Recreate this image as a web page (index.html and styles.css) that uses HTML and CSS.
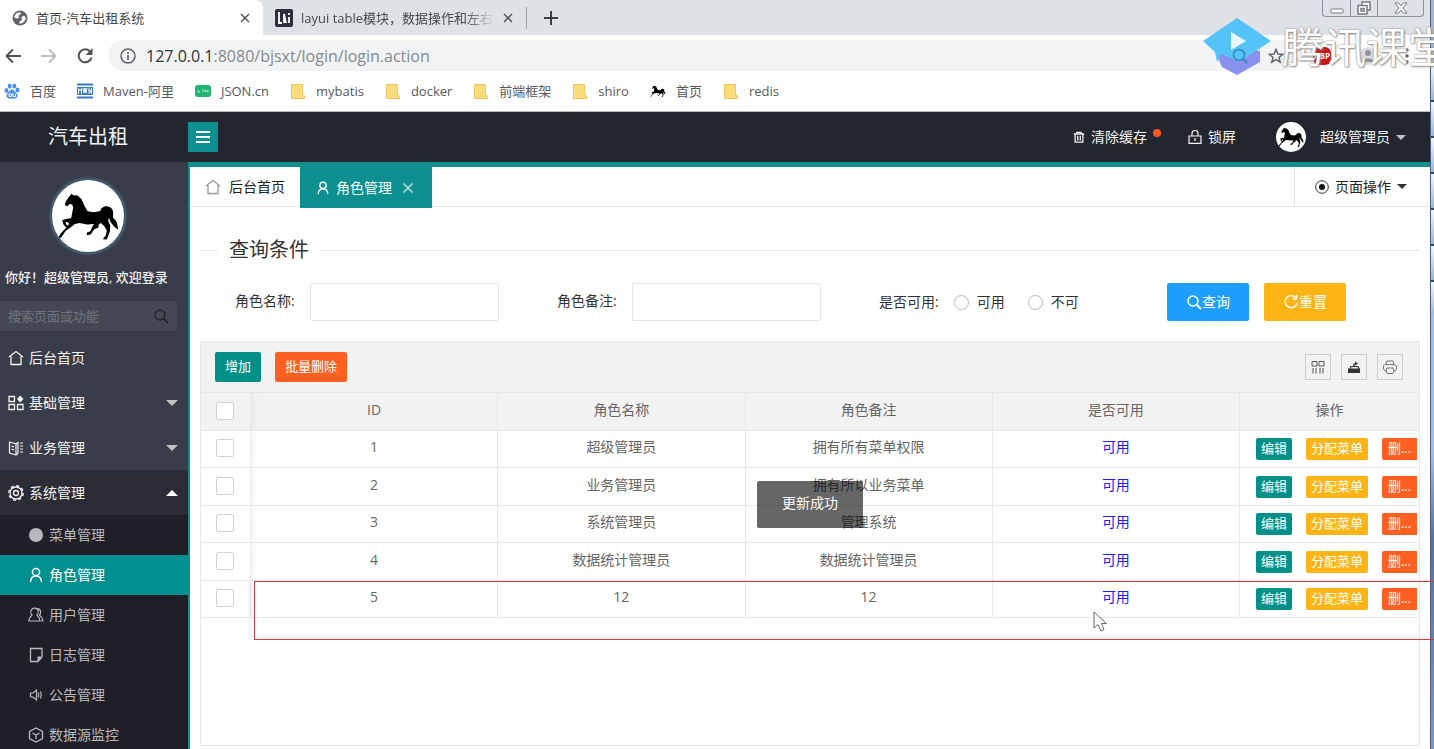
FILE: index.html
```html
<!DOCTYPE html>
<html lang="zh-CN">
<head>
<meta charset="utf-8">
<title>首页-汽车出租系统</title>
<link rel="stylesheet" href="styles.css">
</head>
<body>
<svg class="defs" aria-hidden="true">
  <symbol id="horse" viewBox="158 60 214 214"><path d="M216 101L221 105L234 106L246 117L254 136L264 153L282 156L302 152C302 143 312 138 321 138C334 139 340 148 340 160L339 171L350 184L355 208L343 199L331 183L327 172L325 181L331 196L330 213L321 237L309 236L318 224L321 210L313 197L303 188L297 192L296 201L283 207L273 222L261 224L262 216L272 212L278 198L283 191L262 192L240 188L226 191L212 202L199 211L186 230L174 236L184 219L198 204L209 190L203 184L198 186L201 193L207 198L201 202L192 192L188 180L202 175L215 174L218 158L221 142L218 133L211 131L203 138L196 134L199 124L207 112Z"/></symbol>
  <symbol id="home" viewBox="0 0 16 16"><path d="M1 7L8 1.500L15 7M3 6V14.500H13V6" fill="none" stroke="currentColor" stroke-width="1.300"/></symbol>
  <symbol id="user" viewBox="0 0 16 16"><circle cx="8" cy="5" r="3.600" fill="none" stroke="currentColor" stroke-width="1.500"/><path d="M2.500 15C2.700 11 5 9 8 9S13.300 11 13.500 15" fill="none" stroke="currentColor" stroke-width="1.500"/></symbol>
  <symbol id="search" viewBox="0 0 16 16"><circle cx="7" cy="7" r="5" fill="none" stroke="currentColor" stroke-width="1.500"/><path d="M10.500 10.500L15 15" stroke="currentColor" stroke-width="2"/></symbol>
  <symbol id="folder" viewBox="0 0 16 16"><path d="M1.500 1.500H12.500V11L14.500 13V15.500H1.500Z" fill="#fbdc7c" stroke="#efc75c"/></symbol>
  <symbol id="close" viewBox="0 0 12 12"><path d="M2 2L10 10M10 2L2 10" stroke="currentColor" stroke-width="1.500"/></symbol>
</svg>

<div class="window">
  <div class="browser">
    <div class="tabstrip">
      <div class="btab btab-on">
        <svg class="i16" viewBox="0 0 16 16"><circle cx="8" cy="8" r="7.500" fill="#5f6368"/><path d="M2 7L4 3.500L8 2L9 4L6.500 5.500L7 8L4 8.500ZM9.500 7L12 5.500L14 8L12 12L8 14L7 12L10 10Z" fill="#fff"/></svg>
        <span class="btab-title">首页-汽车出租系统</span>
        <button class="plain" aria-label="关闭标签"><svg class="i12"><use href="#close"/></svg></button>
      </div>
      <div class="btab">
        <svg class="i18" viewBox="0 0 18 18"><rect width="18" height="18" rx="2" fill="#2b303f"/><path d="M4 3V14H7M9 14V5L11 14M14 8V14M14 4V6" stroke="#fff" stroke-width="1.800" fill="none"/></svg>
        <span class="btab-title fade">layui table模块，数据操作和左右</span>
        <button class="plain" aria-label="关闭标签"><svg class="i12"><use href="#close"/></svg></button>
      </div>
      <span class="tab-sep"></span>
      <button class="plain newtab" aria-label="新标签"><svg class="i14" viewBox="0 0 14 14"><path d="M7 0V14M0 7H14" stroke="#3c4043" stroke-width="2"/></svg></button>
      <div class="winbtns">
        <button aria-label="最小化"><svg viewBox="0 0 14 12" class="i14"><rect x="1" y="7" width="12" height="4" rx="1" fill="#fff" stroke="#777b85"/></svg></button>
        <button aria-label="还原"><svg viewBox="0 0 14 14" class="i14"><path d="M5 4V1H13V9H10M1 4.500H10V13H1ZM4 7.500H7V10H4Z" fill="#fff" stroke="#777b85" stroke-width="1.500"/></svg></button>
        <button class="wide" aria-label="关闭"><svg viewBox="0 0 14 12" class="i14"><path d="M1 1H4.500L7 4L9.500 1H13L9 6L13 11H9.500L7 8L4.500 11H1L5 6Z" fill="#fff" stroke="#777b85"/></svg></button>
      </div>
    </div>

    <div class="navbar">
      <button class="plain" aria-label="后退"><svg class="i16" viewBox="0 0 16 16"><path d="M8 1.500L1.500 8L8 14.500M1.500 8H16" fill="none" stroke="#50545a" stroke-width="2"/></svg></button>
      <button class="plain" aria-label="前进"><svg class="i16" viewBox="0 0 16 16"><path d="M8 1.500L14.500 8L8 14.500M14.500 8H0" fill="none" stroke="#bdbfc4" stroke-width="2"/></svg></button>
      <button class="plain" aria-label="刷新"><svg class="i16" viewBox="0 0 16 16"><path d="M13.500 4A6.500 6.500 0 1 0 14.500 9.500" fill="none" stroke="#50545a" stroke-width="2"/><path d="M15.500 0V7H8.500Z" fill="#50545a"/></svg></button>
      <div class="omnibox">
        <svg class="i16" viewBox="0 0 16 16"><circle cx="8" cy="8" r="7" fill="none" stroke="#5f6368" stroke-width="1.500"/><path d="M8 7V12M8 4V5.800" stroke="#5f6368" stroke-width="1.800"/></svg>
        <span class="url"><b>127.0.0.1</b>:8080/bjsxt/login/login.action</span>
        <svg class="i16 star" viewBox="0 0 16 16"><path d="M8 1.500L9.900 6L14.700 6.300L11 9.400L12.200 14.200L8 11.600L3.800 14.200L5 9.400L1.300 6.300L6.100 6Z" fill="none" stroke="#5f6368" stroke-width="1.500"/></svg>
      </div>
      <div class="ext">
        <span class="abp">ABP</span>
        <svg class="i18" viewBox="0 0 18 18"><circle cx="9" cy="9" r="9" fill="#dcdee2"/><circle cx="9" cy="6" r="3" fill="#8f949c"/><path d="M3 15C4 10 14 10 15 15" fill="#8f949c"/></svg>
        <svg class="dots" viewBox="0 0 4 16"><circle cx="2" cy="2" r="1.700"/><circle cx="2" cy="8" r="1.700"/><circle cx="2" cy="14" r="1.700"/></svg>
      </div>
    </div>

    <nav class="bookmarks" aria-label="书签">
      <a href="#"><svg class="i16" viewBox="0 0 16 16" fill="#4a8df0"><ellipse cx="2.500" cy="7.500" rx="2" ry="2.500"/><ellipse cx="5.700" cy="3" rx="2" ry="2.600"/><ellipse cx="10.300" cy="3" rx="2" ry="2.600"/><ellipse cx="13.500" cy="7" rx="2" ry="2.500"/><path d="M8 6.500C10 6.500 11 9 13 11C15 14 12 16.500 8 15.500C4 16.500 1 14 3 11C5 9 6 6.500 8 6.500Z"/><path d="M5 11H7.500V13.500H5ZM9 10V13.500H11.500V11" fill="none" stroke="#fff"/></svg>百度</a>
      <a href="#"><svg class="i16" viewBox="0 0 16 16"><path d="M0 1.500H16M0 14.500H16" stroke="#3a78c2" stroke-width="2"/><rect y="4" width="16" height="8" fill="#3a78c2"/><path d="M1.500 11V5.500L3 8L4.500 5.500V11M6 5L7 10L8 5L9 10L10 5M12 11V5.500L14.500 10.500V5" fill="none" stroke="#fff"/></svg>Maven-阿里</a>
      <a href="#"><svg class="i16" viewBox="0 0 16 16"><rect y="2" width="16" height="12" rx="3" fill="#20b573"/><path d="M3 7V9H5M7 7H8V9M10 9V7L13 9V7" fill="none" stroke="#b9ecd3"/></svg>JSON.cn</a>
      <a href="#"><svg class="i16"><use href="#folder"/></svg>mybatis</a>
      <a href="#"><svg class="i16"><use href="#folder"/></svg>docker</a>
      <a href="#"><svg class="i16"><use href="#folder"/></svg>前端框架</a>
      <a href="#"><svg class="i16"><use href="#folder"/></svg>shiro</a>
      <a href="#"><svg class="i16" viewBox="170 85 190 160"><use href="#horse" x="158" y="60" width="214" height="214"/></svg>首页</a>
      <a href="#"><svg class="i16"><use href="#folder"/></svg>redis</a>
    </nav>
  </div>

  <div class="app">
    <header class="topbar">
      <div class="logo">汽车出租</div>
      <button class="fold" aria-label="折叠菜单"><svg class="i14" viewBox="0 0 14 14"><path d="M0 2H14M0 7H14M0 12H14" stroke="#fff" stroke-width="2"/></svg></button>
      <div class="topright">
        <a href="#" class="cache"><svg class="i12" viewBox="0 0 14 14"><path d="M1 3.500H13M4.500 3V1.500H9.500V3M2.500 4V13H11.500V4M5.500 5.500V11M8.500 5.500V11" fill="none" stroke="currentColor" stroke-width="1.500"/></svg>清除缓存<i class="dot"></i></a>
        <a href="#" class="lock"><svg class="i14" viewBox="0 0 14 14"><path d="M1 6H13V13.400H1ZM4 6V3.500A3 3 0 0 1 10 3.500V6M7 8V11" fill="none" stroke="currentColor" stroke-width="1.200"/></svg>锁屏</a>
        <a href="#" class="me"><span class="avatar small"><svg><use href="#horse"/></svg></span>超级管理员<i class="caret"></i></a>
      </div>
    </header>

    <aside class="sidebar">
      <div class="avatar large"><svg><use href="#horse"/></svg></div>
      <p class="hello">你好！超级管理员, 欢迎登录</p>
      <div class="side-search">
        <input type="text" placeholder="搜索页面或功能" aria-label="搜索页面或功能">
        <svg class="i16"><use href="#search"/></svg>
      </div>
      <nav class="menu">
        <a href="#"><svg class="i16"><use href="#home"/></svg>后台首页</a>
        <a href="#"><svg class="i16" viewBox="0 0 16 16"><path d="M1 1.500H6.500V6.500H1ZM1 9.500H6.500V14.500H1ZM9.500 9.500H15V14.500H9.500Z" fill="none" stroke="currentColor" stroke-width="1.300"/><path d="M12.200 .5L15.500 4L12.200 7.500L9 4Z" fill="currentColor"/></svg>基础管理<i class="caret"></i></a>
        <a href="#"><svg class="i16" viewBox="0 0 16 16"><path d="M1.500 2V13L8 15V4ZM8 4L10 2.500V13L8 15M3.500 6L6 7M3.500 9L6 10M12 3H15M12 6H15M12 9H15M12 12H15" fill="none" stroke="currentColor" stroke-width="1.200"/></svg>业务管理<i class="caret"></i></a>
        <a href="#" class="open"><svg class="i16" viewBox="0 0 16 16"><circle cx="8" cy="8" r="6" fill="none" stroke="currentColor" stroke-width="1.300"/><circle cx="8" cy="8" r="7.200" fill="none" stroke="currentColor" stroke-width="1.400" stroke-dasharray="3 2.650"/><circle cx="8" cy="8" r="2.500" fill="none" stroke="currentColor" stroke-width="1.300"/></svg>系统管理<i class="caret up"></i></a>
        <div class="sub">
          <a href="#"><svg class="i16" viewBox="0 0 16 16"><circle cx="8" cy="8" r="7" fill="currentColor"/></svg>菜单管理</a>
          <a href="#" class="on"><svg class="i16"><use href="#user"/></svg>角色管理</a>
          <a href="#"><svg class="i16" viewBox="0 0 16 16"><path d="M4 8A3.700 4 0 1 1 9 8C9.500 9.500 12 10 12 14H.8C.8 10 3.500 9.500 4 8ZM9.500 1.300C13.500 2 13 7 11.500 8C12 9.500 15 10 15 14H13" fill="none" stroke="currentColor" stroke-width="1.200"/></svg>用户管理</a>
          <a href="#"><svg class="i16" viewBox="0 0 16 16"><path d="M2.500 1.500H14V10L10 14.500H2.500Z" fill="none" stroke="currentColor" stroke-width="1.300"/><path d="M14 9.500H9.500V14.500Z" fill="currentColor"/></svg>日志管理</a>
          <a href="#"><svg class="i16" viewBox="0 0 16 16"><path d="M2.500 6H5L8.500 3V13L5 10H2.500ZM10.500 5.500V10.500M12.500 4.500Q14 8 12.500 11.500" fill="none" stroke="currentColor" stroke-width="1.200"/></svg>公告管理</a>
          <a href="#"><svg class="i16" viewBox="0 0 16 16"><path d="M8 1L14.500 4.500V11.500L8 15L1.500 11.500V4.500ZM4.500 6L8 8L11.500 6M8 8V12" fill="none" stroke="currentColor" stroke-width="1.300"/></svg>数据源监控</a>
        </div>
      </nav>
    </aside>

    <main class="content">
      <div class="pagetabs">
        <a href="#" class="ptab"><svg class="i16 pale"><use href="#home"/></svg>后台首页</a>
        <a href="#" class="ptab on"><svg class="i14"><use href="#user"/></svg>角色管理<svg class="i14 x"><use href="#close"/></svg></a>
        <button class="pageops"><svg class="i14" viewBox="0 0 14 14"><circle cx="7" cy="7" r="6.300" fill="none" stroke="#333"/><circle cx="7" cy="7" r="3" fill="#111"/></svg>页面操作<i class="caret"></i></button>
      </div>

      <div class="page">
        <form>
          <fieldset>
            <legend>查询条件</legend>
            <div class="query">
              <div class="field"><label for="rn">角色名称:</label><input id="rn" type="text"></div>
              <div class="field"><label for="rr">角色备注:</label><input id="rr" type="text"></div>
              <div class="radios">
                <span>是否可用:</span>
                <label><input type="radio" name="ok">可用</label>
                <label><input type="radio" name="ok">不可</label>
              </div>
              <div class="acts">
                <button type="button" class="btn blue"><svg class="i16"><use href="#search"/></svg>查询</button>
                <button type="reset" class="btn gold"><svg class="i16" viewBox="0 0 16 16"><path d="M12.500 3.500A6 6 0 1 0 14 9M13.500 1V5H9.500" fill="none" stroke="currentColor" stroke-width="1.400"/></svg>重置</button>
              </div>
            </div>
          </fieldset>
        </form>

        <section class="grid">
          <div class="tools">
            <button class="sbtn teal">增加</button>
            <button class="sbtn red">批量删除</button>
            <div class="tool-icons">
              <button aria-label="筛选列"><svg class="i14" viewBox="0 0 14 14"><path d="M1 1.500H6V6H1ZM8 1.500H13V6H8ZM2 8V13.500M5 8V13.500M9 8V13.500M12 8V13.500" fill="none" stroke="#555"/></svg></button>
              <button aria-label="导出"><svg class="i14" viewBox="0 0 14 14"><path d="M1 8.500H13V13H1Z" fill="#333"/><path d="M3 9L4 6.500H11L12 9M7 6.500V4H9" fill="none" stroke="#333" stroke-width="1.200"/><path d="M8 1.500L11 3.500L8 5.500Z" fill="#333"/></svg></button>
              <button aria-label="打印"><svg class="i16" viewBox="0 0 16 16"><path d="M4 5.500L5 2H11L12 5.500M4 12H3L1.500 10V7L3 5.500H13L14.500 7V10L13 12H12M5 9H11L12 12L11 14.500H5L4 12Z" fill="none" stroke="#777"/></svg></button>
            </div>
          </div>
          <table>
            <colgroup><col class="c-check"><col><col><col><col><col class="c-ops"></colgroup>
            <thead><tr><th class="pick"><input type="checkbox" aria-label="全选"></th><th>ID</th><th>角色名称</th><th>角色备注</th><th>是否可用</th><th>操作</th></tr></thead>
            <tbody>
              <tr><td class="pick"><input type="checkbox" aria-label="选择 1"></td><td>1</td><td>超级管理员</td><td>拥有所有菜单权限</td><td class="ok">可用</td><td class="ops"><div><button class="xbtn teal">编辑</button><button class="xbtn gold">分配菜单</button><button class="xbtn red cut">删...</button></div></td></tr>
              <tr><td class="pick"><input type="checkbox" aria-label="选择 2"></td><td>2</td><td>业务管理员</td><td>拥有所以业务菜单</td><td class="ok">可用</td><td class="ops"><div><button class="xbtn teal">编辑</button><button class="xbtn gold">分配菜单</button><button class="xbtn red cut">删...</button></div></td></tr>
              <tr><td class="pick"><input type="checkbox" aria-label="选择 3"></td><td>3</td><td>系统管理员</td><td>管理系统</td><td class="ok">可用</td><td class="ops"><div><button class="xbtn teal">编辑</button><button class="xbtn gold">分配菜单</button><button class="xbtn red cut">删...</button></div></td></tr>
              <tr><td class="pick"><input type="checkbox" aria-label="选择 4"></td><td>4</td><td>数据统计管理员</td><td>数据统计管理员</td><td class="ok">可用</td><td class="ops"><div><button class="xbtn teal">编辑</button><button class="xbtn gold">分配菜单</button><button class="xbtn red cut">删...</button></div></td></tr>
              <tr><td class="pick"><input type="checkbox" aria-label="选择 5"></td><td>5</td><td>12</td><td>12</td><td class="ok">可用</td><td class="ops"><div><button class="xbtn teal">编辑</button><button class="xbtn gold">分配菜单</button><button class="xbtn red cut">删...</button></div></td></tr>
            </tbody>
          </table>
        </section>
      </div>
    </main>
  </div>
</div>
<div class="desktop-edge"></div>

<div class="watermark">
  <svg viewBox="0 0 68 58"><path d="M14 38L34 29L57 33V44L34 57L19 49Z" fill="#8a90ee"/><path d="M34 0L68 23L36 44L18 36L14 44L12 34L0 23Z" fill="#55c3f7"/><circle cx="36" cy="37" r="5.500" fill="none" stroke="#3588b8" stroke-width="1.500"/><path d="M40 41L44 45" stroke="#3588b8" stroke-width="2"/><path d="M28 14L43 23L28 32Z" fill="#e8f7fe"/></svg>
  <span>腾讯课堂</span>
</div>
<div class="toast" role="status">更新成功</div>
<div class="marker"></div>
<svg class="cursor" viewBox="0 0 14 21"><path d="M1 1V17L5 13.500L8 20L11 18.500L8.500 12.500H13.500Z" fill="#fff" stroke="#666"/></svg>
</body>
</html>
```

FILE: styles.css
```css
* { box-sizing: border-box; }
body {
  margin: 0;
  height: 100vh;
  display: flex;
  overflow: hidden;
  position: relative;
  background: #fff;
  color: #333;
  font: 14px/20px "Open Sans", "Noto Sans CJK SC", sans-serif;
}
a { color: inherit; text-decoration: none; }
button, input { font: inherit; color: inherit; margin: 0; }
button { border: 0; background: none; padding: 0; cursor: pointer; }
svg { flex: none; display: block; }
.defs { position: absolute; width: 0; height: 0; }
.i12 { width: 12px; height: 12px; }
.i14 { width: 14px; height: 14px; }
.i16 { width: 16px; height: 16px; }
.i18 { width: 18px; height: 18px; }

.window { flex: 1; min-width: 0; display: flex; flex-direction: column; }
.desktop-edge {
  width: 4px;
  border-left: 1px solid #4a5f85;
  background:
    repeating-linear-gradient(#f2f6fb 0, #9fb5d4 34px, #34476b 34px, #34476b 36px) 0 66px / 100% 248px no-repeat,
    linear-gradient(#a9b5c8, #a9bfe0 45%, #a9bfe0 60%, #5a7094 72%, #8196b8);
}

/* browser chrome */
.tabstrip { height: 35px; background: #dee1e6; display: flex; align-items: center; }
.btab { height: 35px; display: flex; align-items: center; gap: 8px; padding: 0 12px; width: 263px; color: #45494d; font-size: 13px; }
.btab-on { background: #fff; border-radius: 0 8px 0 0; }
.btab-title { flex: 1; min-width: 0; white-space: nowrap; overflow: hidden; }
.fade { mask-image: linear-gradient(90deg, #000 85%, transparent); }
.btab .plain { color: #50545a; }
.tab-sep { width: 1px; height: 22px; background: #9fa2a8; }
.newtab { margin-left: 17px; }
.winbtns { margin: 0 6px 0 auto; align-self: flex-start; display: flex; height: 17px; border: 1px solid #8b8f98; border-top: 0; border-radius: 0 0 4px 4px; }
.winbtns button { width: 27px; display: flex; justify-content: center; align-items: center; }
.winbtns button + button { border-left: 1px solid #8b8f98; }
.winbtns .wide { width: 46px; }

.navbar { height: 41px; display: flex; align-items: center; gap: 20px; padding: 0 21px 0 5px; background: #fff; }
.omnibox { flex: 1; height: 31px; border-radius: 16px; background: #f1f3f4; display: flex; align-items: center; gap: 10px; padding: 0 12px; margin: 0 -3px 0 -5px; }
.url { flex: 1; font-size: 16px; color: #85898e; }
.url b { font-weight: 400; color: #2f3337; }
.ext { display: flex; align-items: center; gap: 28px; }
.abp { width: 18px; height: 18px; border-radius: 6px; background: #c9171c; color: #fff; font-size: 8px; line-height: 18px; text-align: center; font-weight: 700; }
.dots { width: 4px; height: 16px; fill: #5f6368; }

.bookmarks { height: 36px; display: flex; align-items: center; gap: 21px; padding: 0 4px 5px; color: #55595e; font-size: 13px; border-bottom: 1px solid #b8bbc0; background: #fff; }
.bookmarks a { display: flex; align-items: center; gap: 10px; }

/* application frame */
.app {
  flex: 1;
  min-height: 0;
  display: grid;
  grid-template: 50px minmax(0, 1fr) / 188px minmax(0, 1fr);
}
.topbar { grid-column: 1 / -1; background: #23262e; color: #f2f2f2; display: flex; align-items: center; }
.logo { width: 188px; padding-right: 12px; text-align: center; font-size: 20px; }
.fold { width: 30px; height: 30px; background: #0f9090; display: flex; align-items: center; justify-content: center; }
.topright { margin-left: auto; display: flex; align-items: center; padding-right: 24px; }
.topright a { display: flex; align-items: center; gap: 6px; }
.cache { margin-right: 27px; }
.lock { margin-right: 40px; }
.dot { width: 8px; height: 8px; border-radius: 50%; background: #ff5722; margin-bottom: 8px; }
.avatar { border-radius: 50%; background: #fff; color: #000; overflow: hidden; }
.avatar svg { width: 100%; height: 100%; }
.small { width: 30px; height: 30px; margin-right: 8px; }
.caret { border: solid transparent; border-width: 5px 5px 0; border-top-color: #c2c2c2; }

.sidebar { background: #393d49; color: #f2f2f2; overflow: hidden; }
.large { width: 78px; height: 78px; margin: 15px 0 0 49px; border: 3px solid #44576b; }
.hello { margin: 12px 0 14px 5px; font-size: 13px; white-space: nowrap; font-weight: 500; }
.side-search { height: 30px; margin-right: 11px; background: #444854; border-radius: 0 2px 2px 0; display: flex; align-items: center; padding: 0 8px; color: #23262e; }
.side-search input { flex: 1; min-width: 0; border: 0; padding: 0; background: none; font-size: 13px; }
.side-search input::placeholder { color: #6f737d; opacity: 1; }
.menu { margin-top: 4px; }
.menu a { height: 45px; display: flex; align-items: center; gap: 5px; padding: 0 10px 0 8px; }
.menu .caret { margin-left: auto; border-width: 6px 6px 0; }
.menu .caret.up { border-width: 0 6px 6px; border-bottom-color: #fff; }
.menu .open { background: #2b2c36; }
.menu .sub { background: #201f27; color: #b9b9bd; }
.menu .sub a { height: 40px; padding-left: 28px; }
.menu .sub .on { background: #009090; color: #fff; }

.content { border: solid #12908f; border-width: 5px 0 0 2px; background: #fff; display: flex; flex-direction: column; min-height: 0; }
.pagetabs { height: 40px; border-bottom: 1px solid #e6e6e6; display: flex; color: #222; }
.ptab { height: 39px; display: flex; align-items: center; gap: 8px; padding: 0 15px; }
.ptab.on { height: 41px; background: #0f9090; color: #fff; gap: 6px; padding: 0 17px 0 16px; }
.pale { color: #999; }
.x { margin-left: 3px; color: #9fd0d0; }
.pageops { margin-left: auto; border-left: 1px solid #e6e6e6; padding: 0 23px 0 20px; display: flex; align-items: center; gap: 6px; }
.pageops .caret { border-top-color: #333; }

.page { flex: 1; min-height: 0; padding: 28px 10px 3px; display: flex; flex-direction: column; }
fieldset { margin: 0; padding: 0; border: 0; border-top: 1px solid #e6e6e6; }
legend { margin-left: 18px; padding: 0 11px; font-size: 20px; line-height: 30px; }
.query { display: flex; align-items: center; padding: 18px 74px 20px 35px; }
.field { display: flex; align-items: center; gap: 15px; margin-right: 58px; white-space: nowrap; }
.field label { width: 60px; padding-bottom: 2px; }
.field input { width: 189px; height: 38px; border: 1px solid #e6e6e6; border-radius: 2px; background: #fff; padding: 0 10px; }
.radios { display: flex; align-items: center; gap: 23px; white-space: nowrap; }
.radios span { margin-right: -8px; }
.radios label { display: flex; align-items: center; gap: 8px; }
input[type="radio"] { appearance: none; width: 15px; height: 15px; border: 1px solid #bbb; border-radius: 50%; background: #fff; }
.acts { margin-left: auto; display: flex; gap: 15px; }
.btn { width: 82px; height: 38px; border-radius: 2px; color: #fff; display: flex; align-items: center; justify-content: center; }
.blue { background: #1e9fff; }
.gold { background: #ffb416; }
.teal { background: #009088; }
.red { background: #ff6022; }

.grid { flex: 1; min-height: 0; border: 1px solid #e6e6e6; }
.tools { height: 50px; background: #f2f2f2; display: flex; align-items: center; gap: 14px; padding: 0 16px 0 14px; }
.sbtn { height: 30px; padding: 0 10px 2px; border-radius: 2px; color: #fff; font-size: 13px; }
.tool-icons { margin-left: auto; display: flex; gap: 10px; }
.tool-icons button { width: 26px; height: 26px; border: 1px solid #ccc; display: flex; align-items: center; justify-content: center; }

table { width: 100%; border-collapse: separate; border-spacing: 0; table-layout: fixed; color: #666; }
.c-check { width: 50px; }
.c-ops { width: 179px; }
th, td { padding: 0 0 4px; height: 37px; line-height: 20px; font-weight: 400; text-align: center; border: solid #e8e8e8; border-width: 0 1px 1px 0; }
th { height: 39px; background: #f2f2f2; border-top-width: 1px; }
tr:nth-child(even) td { height: 38px; }
tr > :last-child { border-right: 0; }
.pick { padding: 0 0 2px; box-shadow: 1px 0 8px rgba(0, 0, 0, .08); clip-path: inset(0 -8px 0 0); }
input[type="checkbox"] { appearance: none; display: block; width: 18px; height: 18px; margin: 0 15px; border: 1px solid #d2d2d2; border-radius: 2px; background: #fff; }
.ok { color: #2020f0; }
.ops { padding: 0; }
.ops div { display: flex; gap: 14px; padding-left: 16px; overflow: hidden; }
.xbtn { flex: none; height: 22px; padding: 0 5px 2px; border-radius: 2px; color: #fff; font-size: 13px; line-height: 20px; }
.cut { width: 35px; border-radius: 2px 0 0 2px; }

/* floating layers */
.watermark { position: absolute; left: 1203px; top: 18px; right: 0; display: flex; align-items: center; gap: 11px; overflow: hidden; }
.watermark svg { width: 68px; height: 58px; }
.watermark span { font-size: 42px; line-height: 58px; white-space: nowrap; color: #fff; text-shadow: 0 0 2px #777, 1px 1px 2px #999; }
.toast { position: absolute; left: 757px; top: 481px; padding: 12px 25px 15px; border-radius: 2px; background: rgba(0, 0, 0, .6); color: #fff; }
.marker { position: absolute; left: 254px; top: 581px; right: -2px; height: 59px; border: 1px solid #d03a40; }
.cursor { position: absolute; left: 1093px; top: 611px; width: 14px; height: 21px; }
```
